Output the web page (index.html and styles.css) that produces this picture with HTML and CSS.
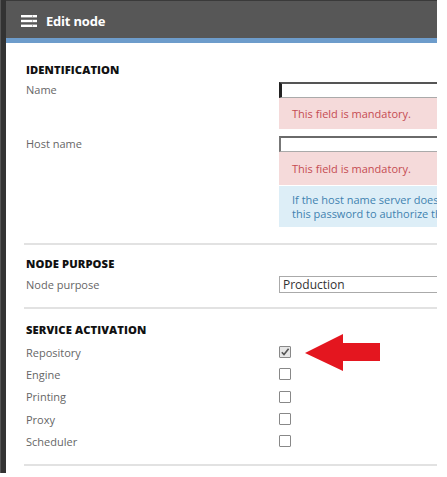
FILE: index.html
```html
<!DOCTYPE html>
<html>
<head>
<meta charset="utf-8">
<link rel="stylesheet" href="styles.css">
</head>
<body>
<div class="frame">
  <div class="strip"></div>
  <div class="main">
    <header class="bar">
      <svg class="menu" width="16" height="12" viewBox="0 0 16 12">
        <rect x="0" y="0" width="16" height="2.4" fill="#fff"/>
        <rect x="0" y="4.8" width="16" height="2.4" fill="#fff"/>
        <rect x="0" y="9.6" width="16" height="2.4" fill="#fff"/>
        <rect x="11" y="0.6" width="1" height="1.2" fill="#9a9a9a"/>
        <rect x="11" y="5.4" width="1" height="1.2" fill="#9a9a9a"/>
        <rect x="11" y="10.2" width="1" height="1.2" fill="#9a9a9a"/>
      </svg>
      <span class="title">Edit node</span>
    </header>
    <div class="content">
      <section class="sec sec-id">
        <h2 class="heading">IDENTIFICATION</h2>
        <div class="row">
          <div class="label lbl-input">Name</div>
          <div class="ctrl">
            <div class="input input-focus"></div>
            <div class="msg err">This field is mandatory.</div>
          </div>
        </div>
        <div class="row row-host">
          <div class="label lbl-input">Host name</div>
          <div class="ctrl">
            <div class="input"></div>
            <div class="msg err err2">This field is mandatory.</div>
            <div class="msg info">If the host name server does not respond,<br>this password to authorize the connection.</div>
          </div>
        </div>
      </section>
      <hr class="divider">
      <section class="sec sec-purpose">
        <h2 class="heading">NODE PURPOSE</h2>
        <div class="row">
          <div class="label lbl-select">Node purpose</div>
          <div class="ctrl">
            <div class="select">Production</div>
          </div>
        </div>
      </section>
      <hr class="divider d2">
      <section class="sec sec-svc">
        <h2 class="heading">SERVICE ACTIVATION</h2>
        <div class="checks">
          <div class="crow">
            <div class="label">Repository</div>
            <div class="ctrl"><span class="box checked">
              <svg width="10" height="10" viewBox="0 0 10 10"><path d="M1.8 5.2 L4 7.6 L8.6 1.8" fill="none" stroke="#555" stroke-width="1.6"/></svg>
            </span>
            <svg class="arrow" width="76" height="38" viewBox="0 0 76 38"><polygon points="0,19 38,0 38,9 75,9 75,27 38,27 38,37" fill="#e4161f"/></svg>
            </div>
          </div>
          <div class="crow"><div class="label">Engine</div><div class="ctrl"><span class="box"></span></div></div>
          <div class="crow"><div class="label">Printing</div><div class="ctrl"><span class="box"></span></div></div>
          <div class="crow"><div class="label">Proxy</div><div class="ctrl"><span class="box"></span></div></div>
          <div class="crow"><div class="label">Scheduler</div><div class="ctrl"><span class="box"></span></div></div>
        </div>
      </section>
      <hr class="divider d3">
    </div>
  </div>
</div>
</body>
</html>
```

FILE: styles.css
```css
html, body {
  margin: 0;
  padding: 0;
  background: #fff;
}
body {
  font-family: "Open Sans", "Liberation Sans", sans-serif;
  width: 447px;
  height: 477px;
  overflow: hidden;
}
.frame {
  display: flex;
  height: 473px;
}
.strip {
  width: 6px;
  background: #333;
  border-left: 1px solid #555;
  box-sizing: border-box;
}
.main {
  width: 431px;
  display: flex;
  flex-direction: column;
}
.bar {
  height: 37px;
  background: #575757;
  border-top: 1px solid #3a3a3a;
  border-bottom: 5px solid #6d9ccb;
  box-sizing: content-box;
  display: flex;
  align-items: center;
  padding-left: 15px;
  gap: 9px;
}
.menu {
  margin-top: 3px;
}
.title {
  color: #fff;
  font-weight: 700;
  font-size: 13px;
  letter-spacing: -0.2px;
  margin-top: 2px;
}
.content {
  padding-left: 20px;
}
.sec {
  display: flex;
  flex-direction: column;
}
.heading {
  margin: 0;
  font-size: 11.2px;
  font-weight: 800;
  color: #111;
  line-height: 16px;
  letter-spacing: 0.1px;
}
.sec-id {
  padding-top: 19px;
}
.row {
  display: flex;
}
.label {
  width: 253px;
  color: #666;
  font-size: 11px;
  line-height: 15px;
}
.ctrl {
  width: 158px;
  display: flex;
  flex-direction: column;
  position: relative;
}
.sec-id .row:first-of-type {
  margin-top: 4px;
}
.input {
  height: 13px;
  border: 1px solid #aaa;
  border-top: 2px solid #6a6a6a;
  border-left: 2px solid #777;
  border-right: none;
}
.input-focus {
  border-left: 3px solid #222;
  border-top-color: #555;
}
.msg {
  font-size: 11px;
  padding-left: 13px;
  line-height: 14px;
}
.err {
  background: #f5dada;
  color: #c54c52;
  height: 31px;
  display: flex;
  align-items: center;
}
.err2 {
  height: 33px;
}
.info {
  margin-top: 1px;
  background: #ddeef7;
  color: #3f82b0;
  height: 41px;
  display: flex;
  align-items: center;
  white-space: nowrap;
  overflow: hidden;
}
.row-host {
  margin-top: 7px;
}
.divider {
  margin: 16px 0 0 -2px;
  border: none;
  height: 2px;
  background: #e2e2e2;
  width: 413px;
}
.sec-purpose {
  padding-top: 11px;
}
.sec-purpose .row {
  margin-top: 4px;
}
.lbl-select {
  line-height: 17px;
}
.select {
  height: 15px;
  border: 1px solid #aaa;
  border-right: none;
  font-size: 12px;
  color: #333;
  line-height: 15px;
  padding-left: 3px;
}
.d2 {
  margin-top: 14px;
}
.sec-svc {
  padding-top: 13px;
}
.checks {
  margin-top: 3px;
}
.crow {
  display: flex;
  height: 22.3px;
  align-items: center;
}
.crow .ctrl {
  flex-direction: row;
  align-items: center;
}
.box {
  width: 10px;
  height: 10px;
  border: 1px solid #888;
  border-radius: 1px;
  display: flex;
  align-items: center;
  justify-content: center;
}
.checked {
  background: #e6e6e6;
}
.arrow {
  position: absolute;
  left: 26px;
  top: -12px;
}
.d3 {
  margin-top: 12px;
}
```
